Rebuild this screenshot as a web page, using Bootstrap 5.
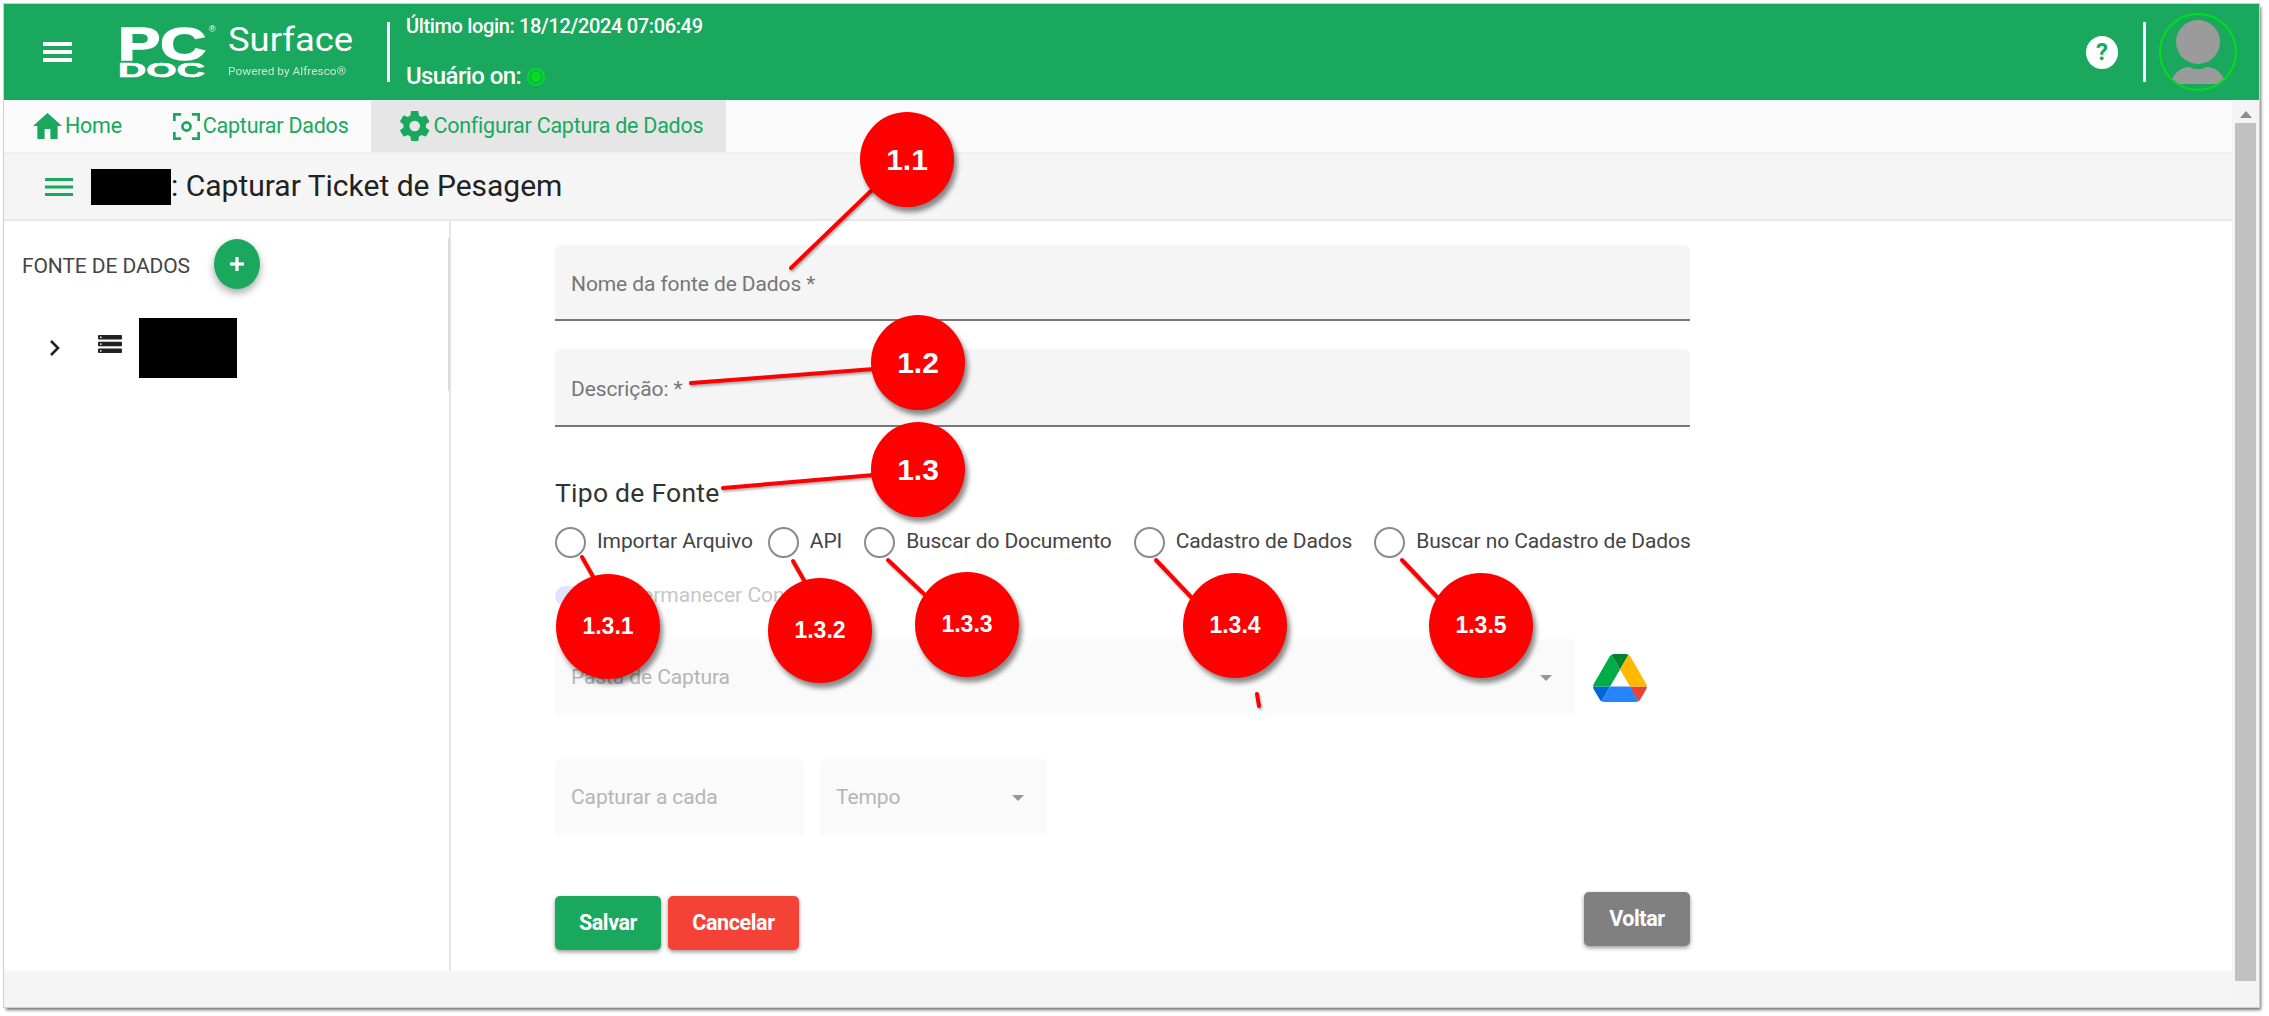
<!DOCTYPE html>
<html lang="pt-BR">
<head>
<meta charset="utf-8">
<title>PC DOC Surface</title>
<link rel="stylesheet" href="https://cdn.jsdelivr.net/npm/bootstrap@5.3.0/dist/css/bootstrap.min.css">
<style>
html,body{height:100%;overflow:hidden;background:#fff}
body{font-family:Roboto,"Liberation Sans",sans-serif;position:relative}
.shot-frame{position:absolute;left:4px;top:4px;width:2255px;height:1003px;box-shadow:0 0 0 1px #cfcfcf,2px 3px 3px rgba(0,0,0,.55);background:#fff}
.top-bar{height:96px;background:#19a85d;color:#fff;flex:none}
.burger-btn{width:29px;height:22px;margin-left:39px;margin-right:46px;flex:none}
.logo-box{width:240px;height:96px;flex:none}
.v-rule{width:3px;background:#fff;height:60px;flex:none}
.logo-rule{margin-left:29px}
.login-info{margin-left:16px;font-weight:500;font-size:20px;letter-spacing:-.35px;height:96px;padding:11px 0 13px;line-height:22px}
.login-user{font-size:24px;letter-spacing:-.6px}
.on-dot{width:18px;height:18px;border-radius:50%;border:2px solid #00e01a;background:#19a85d;display:inline-block;position:relative;vertical-align:-2px}
.on-dot::after{content:"";position:absolute;inset:2px;border-radius:50%;background:#00e01a}
.help-dot{width:32px;height:33px;border-radius:50%;background:#fff;color:#19a85d;font-weight:700;font-size:24px;line-height:33px;text-align:center;margin-right:25px}
.avatar-ring{width:78px;height:78px;border:2px solid #00e01a;border-radius:50%;margin:0 22px 0 13px;overflow:hidden;flex:none}
.tab-strip{height:54px;background:#fafafa;border-bottom:2px solid #efefef;flex:none}
.tab-item{height:52px;color:#19a85d;font-size:21.5px;letter-spacing:-.25px;padding:0 12px 0 29px;gap:3px}
.tab-item.tab-on{background:#e6e6e6;padding:0 23px 0 29px;margin-left:0}
.title-bar{height:67px;background:#f5f5f5;border-bottom:2px solid #e8e8e8;flex:none;color:#222;font-size:30px;padding-left:41px}
.title-text{padding-bottom:3px}
.hide-box{background:#000;flex:none}
.side-pane{width:447px;flex:none;border-right:2px solid #e4e4e4;position:relative}
.side-pane::after{content:"";position:absolute;right:-1px;top:17px;height:153px;width:2px;background:#dcdcdc}
.side-head{padding:7px 0 0 18px;height:84px;color:#444;font-size:21px;letter-spacing:-.1px}
.add-fab{width:46px;height:50px;border-radius:50%;background:#19a85d;color:#fff;padding:0;border:0;margin:-6px 0 0 24px;box-shadow:0 4px 9px rgba(0,0,0,.35)}
.add-fab:hover{background:#19a85d}
.form-pane{padding:24px 0 0 104px;position:relative}
.form-col{width:1135px}
.fill-input.form-control{height:76px;background:#f5f5f5;border:0;border-bottom:2px solid #777;border-radius:6px 6px 0 0;font-size:21px;letter-spacing:-.1px;padding:4px 16px 0;font-family:inherit}
.fill-input.form-control::placeholder{color:#777;opacity:1}
.tipo-head{font-size:26.5px;color:#333;letter-spacing:.25px;margin:51px 0 17px;line-height:30px}
.radio-row{height:34px}
.radio-opt{display:flex;align-items:center;margin:0 0 0 22px;padding:0;min-height:0}
.radio-opt:first-child{margin-left:0}
.radio-opt.near-prev{margin-left:15px}
.radio-opt .form-check-input{width:31px;height:31px;margin:0;float:none;border:2px solid #8a8a8a;background-color:#fff}
.radio-opt .form-check-label{font-size:21px;color:#444;margin-left:11px;letter-spacing:-.1px;white-space:nowrap}
.toggle-line{height:80px;padding-bottom:6px;color:#c6c6c6;font-size:21px}
.toggle-pill{width:66px;height:20px;border-radius:10px;background:#dfe3ff;display:inline-block;flex:none}
.faint-field{background:#fafafa;border-radius:6px 6px 0 0;height:76px;color:#b5b5b5;font-size:21px;padding:2px 16px 0;letter-spacing:-.1px}
.caret-down{width:0;height:0;border-left:6px solid transparent;border-right:6px solid transparent;border-top:6px solid #969696;margin-right:7px}
.act-btn{color:#fff;font-weight:700;font-size:21.5px;letter-spacing:-.4px;border:0;border-radius:5px;height:54px;padding:0;box-shadow:0 2px 4px rgba(0,0,0,.4)}
.act-btn:hover{color:#fff}
.btn-salvar{background:#19a85d;width:106px}
.btn-salvar:hover{background:#19a85d}
.btn-cancelar{background:#f44336;width:131px;margin-left:7px}
.btn-cancelar:hover{background:#f44336}
.btn-voltar{background:#808080;width:106px;margin-bottom:4px}
.btn-voltar:hover{background:#808080}
.foot-bar{height:36px;background:#f5f5f5;flex:none}
.scroll-rail{width:27px;background:#f4f4f4;flex:none;position:relative}
.scroll-up{width:0;height:0;border-left:6px solid transparent;border-right:6px solid transparent;border-bottom:7px solid #8c8c8c;margin:11px auto 5px}
.scroll-thumb{width:21px;height:858px;background:#c1c1c1;margin-left:3px}
.note-lines{position:absolute;left:0;top:0;pointer-events:none;filter:drop-shadow(1px 2px 1px rgba(0,0,0,.3))}
.note-bub{position:absolute;background:#f00;border-radius:50%;color:#fff;font-family:"Liberation Sans",sans-serif;font-weight:700;display:flex;align-items:center;justify-content:center;box-shadow:3px 5px 5px rgba(0,0,0,.45)}
.note-big{width:94px;height:95px;font-size:30px}
.note-small{width:104px;height:105px;font-size:23px}
.b11{left:860px;top:112px}.b12{left:871px;top:315px}.b13{left:871px;top:422px}
.b131{left:556px;top:574px}.b132{left:768px;top:578px}.b133{left:915px;top:572px}.b134{left:1183px;top:573px}.b135{left:1429px;top:573px}
</style>
</head>
<body>
<div class="shot-frame d-flex flex-column">
  <header class="top-bar d-flex align-items-center">
    <svg class="burger-btn" viewBox="0 0 29 22"><g fill="#fff"><rect y="1" width="29" height="4"/><rect y="9" width="29" height="4"/><rect y="17" width="29" height="4"/></g></svg>
    <svg class="logo-box" viewBox="0 0 240 96" font-family="'Liberation Sans',sans-serif" fill="#fff">
      <text x="0" y="56" font-size="46" font-weight="700" textLength="88" lengthAdjust="spacingAndGlyphs" stroke="#fff" stroke-width="1.5">PC</text>
      <text x="91" y="28" font-size="9">®</text>
      <text x="0" y="73" font-size="19.5" font-weight="700" textLength="87" lengthAdjust="spacingAndGlyphs" stroke="#fff" stroke-width=".6">DOC</text>
      <text x="110" y="47" font-size="33" font-family="Roboto,sans-serif" font-weight="400" textLength="125" lengthAdjust="spacingAndGlyphs">Surface</text>
      <text x="110" y="71" font-size="11" font-family="Roboto,sans-serif" opacity=".75" textLength="118" lengthAdjust="spacingAndGlyphs">Powered by Alfresco®</text>
    </svg>
    <div class="v-rule logo-rule"></div>
    <div class="login-info d-flex flex-column justify-content-between">
      <div>Último login: 18/12/2024 07:06:49</div>
      <div class="login-user">Usuário on: <span class="on-dot"></span></div>
    </div>
    <div class="ms-auto d-flex align-items-center">
      <div class="help-dot">?</div>
      <div class="v-rule"></div>
      <div class="avatar-ring">
        <svg width="74" height="74" viewBox="0 0 74 74" class="d-block"><circle cx="37" cy="27" r="22" fill="#9b9b9b"/><path d="M9 69C13 57 20 52 29 52c4 3 12 3 16 0 9 0 16 5 20 17z" fill="#9b9b9b"/></svg>
      </div>
    </div>
  </header>
  <div class="d-flex flex-grow-1" style="min-height:0">
    <div class="d-flex flex-column flex-grow-1" style="min-width:0">
      <nav class="tab-strip d-flex">
        <div class="tab-item d-flex align-items-center">
          <svg width="29" height="26" viewBox="2 3 20 18" preserveAspectRatio="none" fill="#19a85d"><path d="M10 21v-7h4v7h5v-9h3L12 3 2 12h3v9z"/></svg><span>Home</span>
        </div>
        <div class="tab-item d-flex align-items-center" style="padding-left:39px;padding-right:23px">
          <svg width="27" height="27" viewBox="2 2 20 20" fill="none" stroke="#19a85d" stroke-width="2"><path d="M3 8V3h5M16 3h5v5M21 16v5h-5M8 21H3v-5"/><circle cx="12" cy="12" r="3"/></svg><span>Capturar Dados</span>
        </div>
        <div class="tab-item tab-on d-flex align-items-center">
          <svg width="30" height="30" viewBox="1.8 1.8 20.4 20.4" fill="#19a85d"><path d="M19.4 13c.04-.33.06-.66.06-1s-.02-.67-.07-1l2.16-1.68a.5.5 0 0 0 .12-.64l-2.05-3.54a.5.5 0 0 0-.62-.22l-2.55 1.02a7.5 7.5 0 0 0-1.73-1l-.38-2.7A.5.5 0 0 0 13.84 1.8H9.76a.5.5 0 0 0-.5.42l-.38 2.7c-.62.26-1.2.6-1.73 1L4.6 4.92a.5.5 0 0 0-.62.22L1.93 8.68a.5.5 0 0 0 .12.64L4.2 11c-.05.33-.08.67-.08 1s.03.67.08 1l-2.15 1.68a.5.5 0 0 0-.12.64l2.05 3.54c.13.22.39.3.62.22l2.55-1.02c.53.4 1.1.74 1.73 1l.38 2.7c.04.24.25.42.5.42h4.08c.25 0 .46-.18.5-.42l.38-2.7c.62-.26 1.2-.6 1.73-1l2.55 1.02c.23.08.49 0 .62-.22l2.05-3.54a.5.5 0 0 0-.12-.64zM11.8 15.6a3.6 3.6 0 1 1 0-7.2 3.6 3.6 0 0 1 0 7.2z"/></svg><span>Configurar Captura de Dados</span>
        </div>
      </nav>
      <div class="title-bar d-flex align-items-center">
        <svg width="28" height="20" viewBox="0 0 28 20" fill="#19a85d" style="margin-right:18px"><rect y="1" width="28" height="3"/><rect y="8.5" width="28" height="3"/><rect y="16" width="28" height="3"/></svg>
        <span class="hide-box" style="width:80px;height:36px"></span><span class="title-text">: Capturar Ticket de Pesagem</span>
      </div>
      <div class="d-flex flex-grow-1" style="min-height:0">
        <aside class="side-pane">
          <div class="side-head d-flex align-items-center">
            <span>FONTE DE DADOS</span>
            <button class="btn add-fab" type="button" aria-label="Adicionar">
              <svg width="20" height="20" viewBox="0 0 20 20" fill="#fff"><rect x="8.4" y="3" width="3.2" height="14"/><rect x="3" y="8.4" width="14" height="3.2"/></svg>
            </button>
          </div>
          <div class="d-flex align-items-center" style="padding:13px 0 0 45px">
            <svg width="12" height="18" viewBox="0 0 12 18" fill="none" stroke="#222" stroke-width="2.6"><path d="M2 2l7 7-7 7"/></svg>
            <svg width="24" height="20" viewBox="0 0 24 20" style="margin:-8px 0 0 37px"><g fill="#222"><rect y="1" width="24" height="4.4" rx="1"/><rect y="7.8" width="24" height="4.4" rx="1"/><rect y="14.6" width="24" height="4.4" rx="1"/></g><g fill="#fff"><rect x="2" y="2.6" width="1.6" height="1.4"/><rect x="2" y="9.4" width="1.6" height="1.4"/><rect x="2" y="16.2" width="1.6" height="1.4"/></g></svg>
            <span class="hide-box" style="width:98px;height:60px;margin-left:17px"></span>
          </div>
        </aside>
        <main class="form-pane flex-grow-1">
          <div class="form-col">
            <input class="form-control fill-input" type="text" placeholder="Nome da fonte de Dados *">
            <input class="form-control fill-input" style="margin-top:28px;height:78px" type="text" placeholder="Descrição: *">
            <div class="tipo-head">Tipo de Fonte</div>
            <div class="radio-row d-flex">
              <div class="form-check radio-opt"><input class="form-check-input" type="radio" name="tipo" id="r1"><label class="form-check-label" for="r1">Importar Arquivo</label></div>
              <div class="form-check radio-opt near-prev"><input class="form-check-input" type="radio" name="tipo" id="r2"><label class="form-check-label" for="r2">API</label></div>
              <div class="form-check radio-opt"><input class="form-check-input" type="radio" name="tipo" id="r3"><label class="form-check-label" for="r3">Buscar do Documento</label></div>
              <div class="form-check radio-opt"><input class="form-check-input" type="radio" name="tipo" id="r4"><label class="form-check-label" for="r4">Cadastro de Dados</label></div>
              <div class="form-check radio-opt"><input class="form-check-input" type="radio" name="tipo" id="r5"><label class="form-check-label" for="r5">Buscar no Cadastro de Dados</label></div>
            </div>
            <div class="toggle-line d-flex align-items-center gap-2"><span class="toggle-pill"></span><span>Permanecer Conectado</span></div>
            <div class="d-flex align-items-center">
              <div class="faint-field d-flex align-items-center justify-content-between" style="width:1020px"><span>Pasta de Captura</span><span class="caret-down"></span></div>
              <svg width="56" height="48" viewBox="0 0 87.3 78" style="margin-left:17px;margin-top:2px">
                <path d="m6.6 66.85 3.85 6.65c.8 1.4 1.95 2.5 3.3 3.3l13.75-23.8h-27.5c0 1.55.4 3.1 1.2 4.5z" fill="#0066da"/>
                <path d="m43.65 25-13.75-23.8c-1.35.8-2.5 1.9-3.3 3.3l-25.4 44a9.06 9.06 0 0 0 -1.2 4.5h27.5z" fill="#00ac47"/>
                <path d="m73.55 76.8c1.35-.8 2.5-1.9 3.3-3.3l1.6-2.75 7.65-13.25c.8-1.4 1.2-2.95 1.2-4.5h-27.502l5.852 11.5z" fill="#ea4335"/>
                <path d="m43.65 25 13.75-23.8c-1.35-.8-2.9-1.2-4.5-1.2h-18.5c-1.6 0-3.15.45-4.5 1.2z" fill="#00832d"/>
                <path d="m59.8 53h-32.3l-13.75 23.8c1.35.8 2.9 1.2 4.5 1.2h50.8c1.6 0 3.15-.45 4.5-1.2z" fill="#2684fc"/>
                <path d="m73.4 26.5-12.7-22c-.8-1.4-1.95-2.5-3.3-3.3l-13.75 23.8 16.15 28h27.45c0-1.55-.4-3.1-1.2-4.5z" fill="#ffba00"/>
              </svg>
            </div>
            <div class="d-flex" style="margin-top:44px;gap:16px">
              <div class="faint-field d-flex align-items-center" style="width:249px">Capturar a cada</div>
              <div class="faint-field d-flex align-items-center justify-content-between" style="width:227px"><span>Tempo</span><span class="caret-down"></span></div>
            </div>
            <div class="d-flex align-items-end justify-content-between" style="margin-top:57px">
              <div class="d-flex">
                <button class="btn act-btn btn-salvar" type="button">Salvar</button>
                <button class="btn act-btn btn-cancelar" type="button">Cancelar</button>
              </div>
              <button class="btn act-btn btn-voltar" type="button">Voltar</button>
            </div>
          </div>
        </main>
      </div>
      <div class="foot-bar"></div>
    </div>
    <div class="scroll-rail"><div class="scroll-up"></div><div class="scroll-thumb"></div></div>
  </div>
</div>
<svg class="note-lines" width="2269" height="1016" viewBox="0 0 2269 1016" fill="none" stroke="#f00" stroke-width="4" stroke-linecap="round">
  <path d="M791 268 L872 190"/>
  <path d="M691 383 L874 369"/>
  <path d="M723 488 L874 475"/>
  <path d="M582 557 L595 580"/>
  <path d="M793 561 L805 582"/>
  <path d="M888 560 L924 594"/>
  <path d="M1156 560 L1192 598"/>
  <path d="M1402 560 L1438 598"/>
  <path d="M1257 694 L1259 706"/>
</svg>
<div class="note-bub note-big b11">1.1</div>
<div class="note-bub note-big b12">1.2</div>
<div class="note-bub note-big b13">1.3</div>
<div class="note-bub note-small b131">1.3.1</div>
<div class="note-bub note-small b132">1.3.2</div>
<div class="note-bub note-small b133">1.3.3</div>
<div class="note-bub note-small b134">1.3.4</div>
<div class="note-bub note-small b135">1.3.5</div>
</body>
</html>
